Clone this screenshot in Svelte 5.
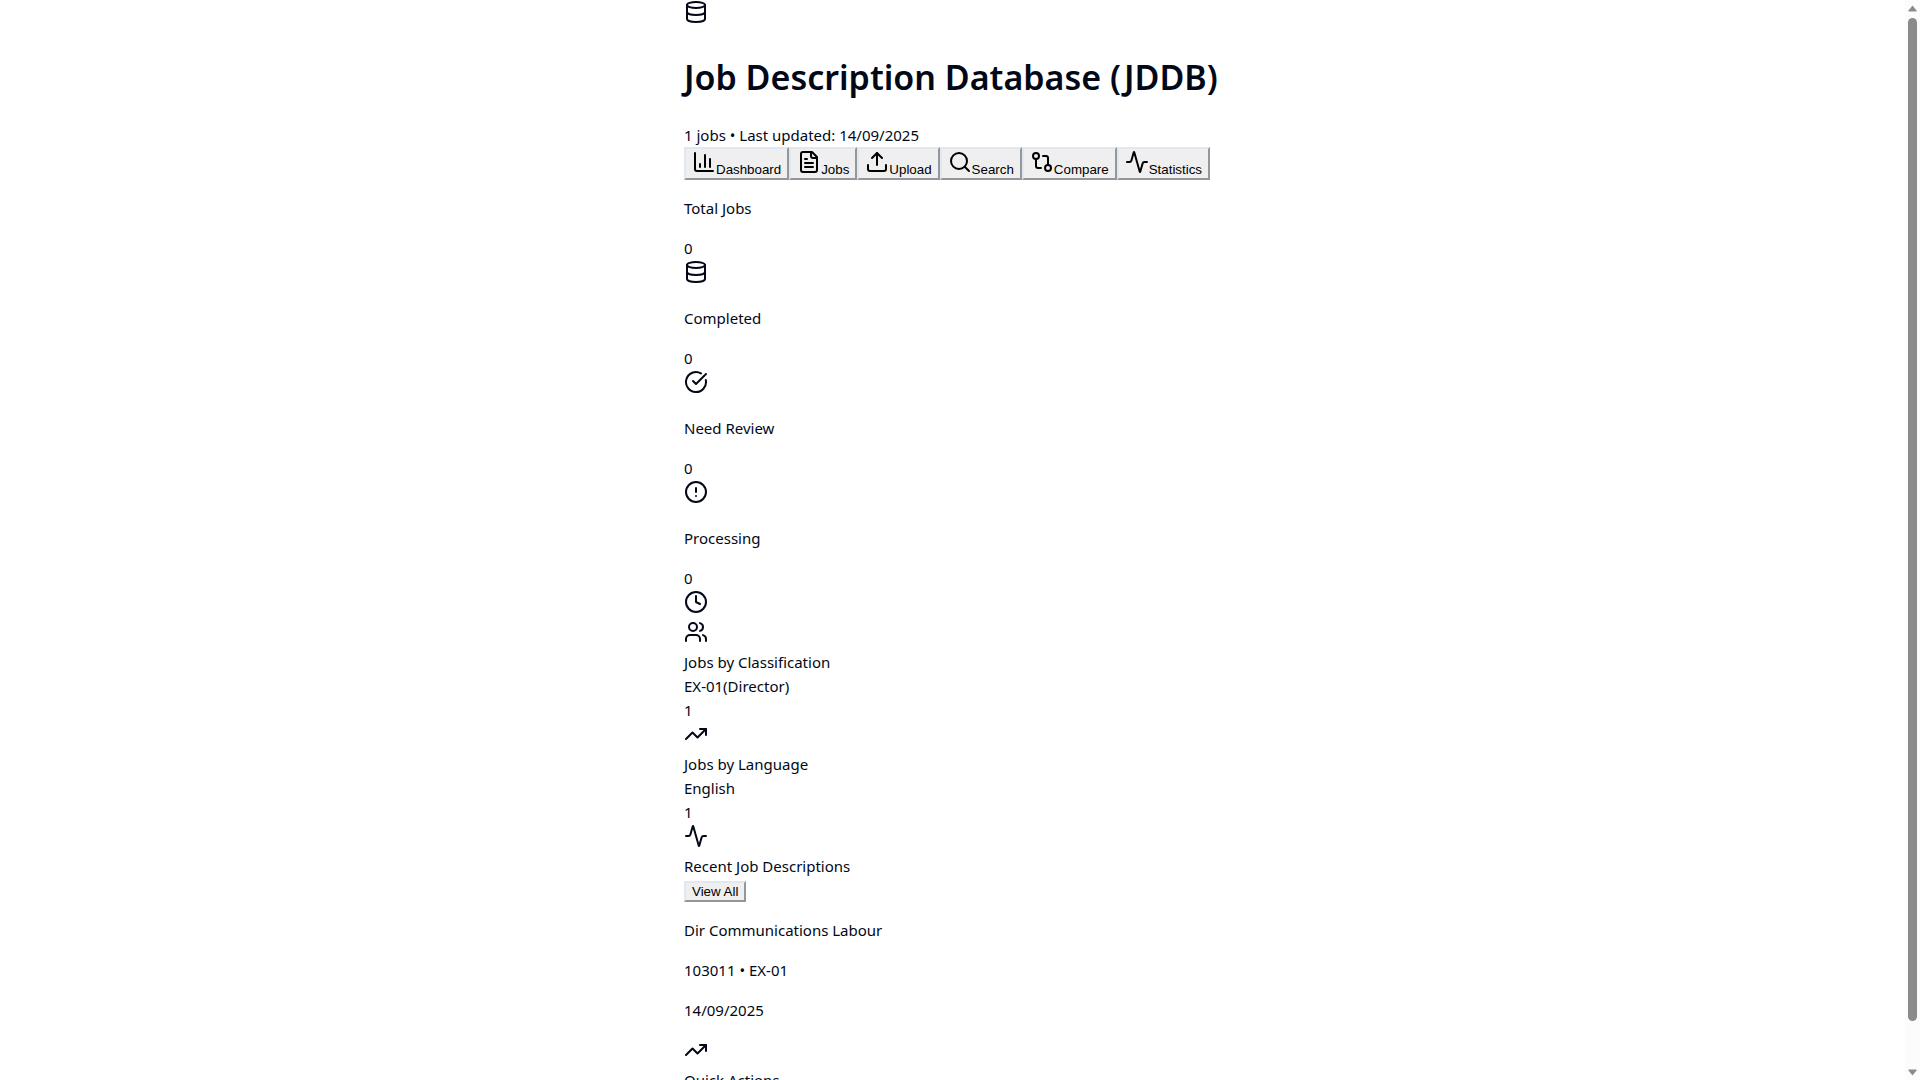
<script>
  const icons = {
    database: ['M3 5a9 3 0 1 0 18 0a9 3 0 1 0-18 0', 'M3 5V19A9 3 0 0 0 21 19V5', 'M3 12A9 3 0 0 0 21 12'],
    chart: ['M3 3v16a2 2 0 0 0 2 2h16', 'M18 17V9', 'M13 17V5', 'M8 17v-3'],
    file: ['M15 2H6a2 2 0 0 0-2 2v16a2 2 0 0 0 2 2h12a2 2 0 0 0 2-2V7Z', 'M14 2v4a2 2 0 0 0 2 2h4', 'M10 9H8', 'M16 13H8', 'M16 17H8'],
    upload: ['M21 15v4a2 2 0 0 1-2 2H5a2 2 0 0 1-2-2v-4', 'M17 8l-5-5-5 5', 'M12 3v12'],
    search: ['M3 11a8 8 0 1 0 16 0a8 8 0 1 0-16 0', 'm21 21-4.3-4.3'],
    compare: ['M15 18a3 3 0 1 0 6 0a3 3 0 1 0-6 0', 'M3 6a3 3 0 1 0 6 0a3 3 0 1 0-6 0', 'M13 6h3a2 2 0 0 1 2 2v7', 'M11 18H8a2 2 0 0 1-2-2V9'],
    activity: ['M22 12h-2.48a2 2 0 0 0-1.93 1.46l-2.35 8.36a.25.25 0 0 1-.48 0L9.24 2.18a.25.25 0 0 0-.48 0l-2.35 8.36A2 2 0 0 1 4.49 12H2'],
    check: ['M21.801 10A10 10 0 1 1 17 3.335', 'm9 11 3 3L22 4'],
    alert: ['M2 12a10 10 0 1 0 20 0a10 10 0 1 0-20 0', 'M12 8v4', 'M12 16h.01'],
    clock: ['M2 12a10 10 0 1 0 20 0a10 10 0 1 0-20 0', 'M12 6v6l4 2'],
    users: ['M16 21v-2a4 4 0 0 0-4-4H6a4 4 0 0 0-4 4v2', 'M5 7a4 4 0 1 0 8 0a4 4 0 1 0-8 0', 'M22 21v-2a4 4 0 0 0-3-3.87', 'M16 3.13a4 4 0 0 1 0 7.75'],
    trending: ['M22 7l-8.5 8.5-5-5L2 17', 'M16 7h6v6'],
  };

  const tabs = [
    { label: 'Dashboard', icon: 'chart' },
    { label: 'Jobs', icon: 'file' },
    { label: 'Upload', icon: 'upload' },
    { label: 'Search', icon: 'search' },
    { label: 'Compare', icon: 'compare' },
    { label: 'Statistics', icon: 'activity' },
  ];

  const stats = [
    { label: 'Total Jobs', value: 0, icon: 'database' },
    { label: 'Completed', value: 0, icon: 'check' },
    { label: 'Need Review', value: 0, icon: 'alert' },
    { label: 'Processing', value: 0, icon: 'clock' },
  ];

  const breakdowns = [
    { title: 'Jobs by Classification', icon: 'users', name: 'EX-01(Director)', count: 1 },
    { title: 'Jobs by Language', icon: 'trending', name: 'English', count: 1 },
  ];
</script>

{#snippet icon(name)}
  <svg class="icon" viewBox="0 0 24 24" aria-hidden="true">
    {#each icons[name] as d}<path {d} />{/each}
  </svg>
{/snippet}

<div class="window">
  <main class="page">
    <div class="content">
      <header>
        <div class="icon-row">{@render icon('database')}</div>
        <h1>Job Description Database (JDDB)</h1>
        <div>1 jobs • Last updated: 14/09/2025</div>
      </header>

      <nav class="tabs">
        {#each tabs as tab}
          <button type="button">{@render icon(tab.icon)}{tab.label}</button>
        {/each}
      </nav>

      {#each stats as stat}
        <section>
          <p>{stat.label}</p>
          <div>{stat.value}</div>
          <div class="icon-row">{@render icon(stat.icon)}</div>
        </section>
      {/each}

      {#each breakdowns as group}
        <section>
          <div class="icon-row">{@render icon(group.icon)}</div>
          <div>{group.title}</div>
          <div>{group.name}</div>
          <div>{group.count}</div>
        </section>
      {/each}

      <section>
        <div class="icon-row">{@render icon('activity')}</div>
        <div>Recent Job Descriptions</div>
        <div class="action"><button type="button">View All</button></div>
        <p>Dir Communications Labour</p>
        <p>103011 • EX-01</p>
        <p>14/09/2025</p>
      </section>

      <section>
        <div class="icon-row">{@render icon('trending')}</div>
        <div>Quick Actions</div>
      </section>
    </div>
  </main>

  <div class="scrollbar" aria-hidden="true">
    <svg class="arrow" viewBox="0 0 9 7"><path d="M4.5 0.5L8.5 5.5V6.5H0.5V5.5Z" /></svg>
    <div class="track"><div class="thumb"></div></div>
    <svg class="arrow" viewBox="0 0 9 7"><path d="M4.5 6.5L8.5 1.5V0.5H0.5V1.5Z" /></svg>
  </div>
</div>

<style>
  :global(body) {
    margin: 0;
    background: #fff;
  }

  .window {
    display: grid;
    grid-template-columns: 1fr 15px;
    height: 100vh;
    overflow: hidden;
    color: #020817;
    font-family: 'Segoe UI', 'Noto Sans', 'Open Sans', sans-serif;
    font-size: 15px;
    line-height: 24px;
  }

  .page {
    display: flex;
    justify-content: center;
    align-items: flex-start;
    min-width: 0;
    overflow: hidden;
  }

  .content {
    width: 100%;
    max-width: 537px;
  }

  h1 {
    margin: 25px 0 23px;
    font-size: 34px;
    font-weight: 600;
    line-height: 45px;
    white-space: nowrap;
  }

  p {
    margin: 16px 0;
  }

  .icon {
    width: 24px;
    height: 24px;
    fill: none;
    stroke: currentColor;
    stroke-width: 2;
    stroke-linecap: round;
    stroke-linejoin: round;
  }

  .icon-row {
    display: flex;
    height: 30px;
  }

  button {
    padding: 1px 6px;
    border: 2px outset #e2e8f0;
    background: #efefef;
    color: #000;
    font-family: Arial, 'Liberation Sans', sans-serif;
    line-height: normal;
  }

  .tabs {
    display: flex;
  }

  .action {
    display: flex;
    padding-top: 3px;
  }

  .scrollbar {
    display: flex;
    flex-direction: column;
    align-items: center;
    gap: 6px;
    padding: 5px 0 4px;
    background: #fcfcfc;
  }

  .arrow {
    flex: none;
    width: 9px;
    height: 7px;
    fill: #8b8b8b;
  }

  .track {
    flex: 1;
    width: 9px;
  }

  .thumb {
    height: 96%;
    border-radius: 5px;
    background: #8b8b8b;
  }
</style>
